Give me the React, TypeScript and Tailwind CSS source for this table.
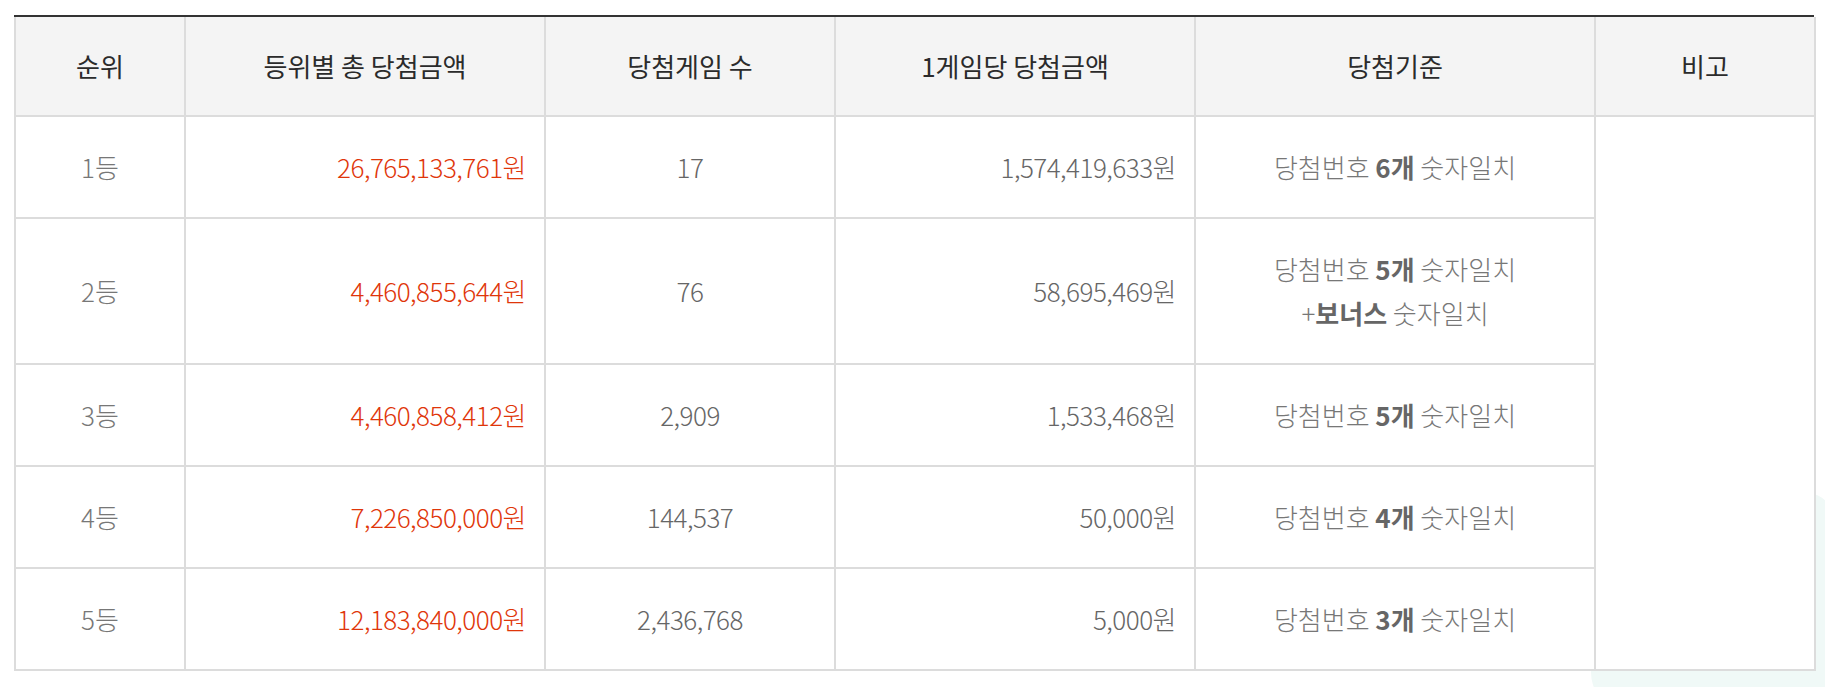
import type { ReactNode } from "react";

type PrizeRow = {
  rank: string;
  total: string;
  count: string;
  perGame: string;
  rule: ReactNode;
};

const rows: PrizeRow[] = [
  {
    rank: "1등",
    total: "26,765,133,761원",
    count: "17",
    perGame: "1,574,419,633원",
    rule: (
      <>
        당첨번호 <b className="font-bold text-[#666]">6개</b> 숫자일치
      </>
    ),
  },
  {
    rank: "2등",
    total: "4,460,855,644원",
    count: "76",
    perGame: "58,695,469원",
    rule: (
      <>
        당첨번호 <b className="font-bold text-[#666]">5개</b> 숫자일치
        <br />+<b className="font-bold text-[#666]">보너스</b> 숫자일치
      </>
    ),
  },
  {
    rank: "3등",
    total: "4,460,858,412원",
    count: "2,909",
    perGame: "1,533,468원",
    rule: (
      <>
        당첨번호 <b className="font-bold text-[#666]">5개</b> 숫자일치
      </>
    ),
  },
  {
    rank: "4등",
    total: "7,226,850,000원",
    count: "144,537",
    perGame: "50,000원",
    rule: (
      <>
        당첨번호 <b className="font-bold text-[#666]">4개</b> 숫자일치
      </>
    ),
  },
  {
    rank: "5등",
    total: "12,183,840,000원",
    count: "2,436,768",
    perGame: "5,000원",
    rule: (
      <>
        당첨번호 <b className="font-bold text-[#666]">3개</b> 숫자일치
      </>
    ),
  },
];

const headers = ["순위", "등위별 총 당첨금액", "당첨게임 수", "1게임당 당첨금액", "당첨기준", "비고"];

const cell = "border-2 border-[#dcdcdc] px-5 py-[28px] leading-[44px]";
const num = "tracking-[-0.5px]";

export default function App() {
  return (
    <div className="relative h-[687px] overflow-hidden bg-white font-['Noto_Sans_CJK_KR','Noto_Sans',sans-serif]">
      {/* faint decorative shape behind the table */}
      <div className="absolute left-[1636px] top-[536px] h-[300px] w-[300px] -rotate-[40deg] rounded-[40px] bg-[#f0f9f7]" />

      <div className="relative z-10 pl-[14px] pt-[15px]">
        <div className="w-[1800px] border-t-2 border-[#333] bg-white">
          <table className="w-full table-fixed border-collapse text-[26px]">
            <colgroup>
              <col className="w-[170px]" />
              <col className="w-[360px]" />
              <col className="w-[290px]" />
              <col className="w-[360px]" />
              <col className="w-[400px]" />
              <col className="w-[220px]" />
            </colgroup>
            <thead>
              <tr className="bg-[#f4f4f4]">
                {headers.map((h) => (
                  <th
                    key={h}
                    className="border-2 border-t-0 border-[#dcdcdc] px-5 py-[27px] text-center font-normal leading-[44px] text-[#2b2b2b]"
                  >
                    {h}
                  </th>
                ))}
              </tr>
            </thead>
            <tbody>
              {rows.map((row, i) => (
                <tr key={row.rank}>
                  <td className={`${cell} text-center font-light text-[#777]`}>{row.rank}</td>
                  <td className={`${cell} ${num} pr-[18px] text-right font-light text-[#df360a]`}>{row.total}</td>
                  <td className={`${cell} ${num} text-center font-light text-[#666]`}>{row.count}</td>
                  <td className={`${cell} ${num} pr-[18px] text-right font-light text-[#666]`}>{row.perGame}</td>
                  <td className={`${cell} text-center font-light text-[#777]`}>{row.rule}</td>
                  {i === 0 && <td rowSpan={rows.length} className={cell} />}
                </tr>
              ))}
            </tbody>
          </table>
        </div>
      </div>
    </div>
  );
}
